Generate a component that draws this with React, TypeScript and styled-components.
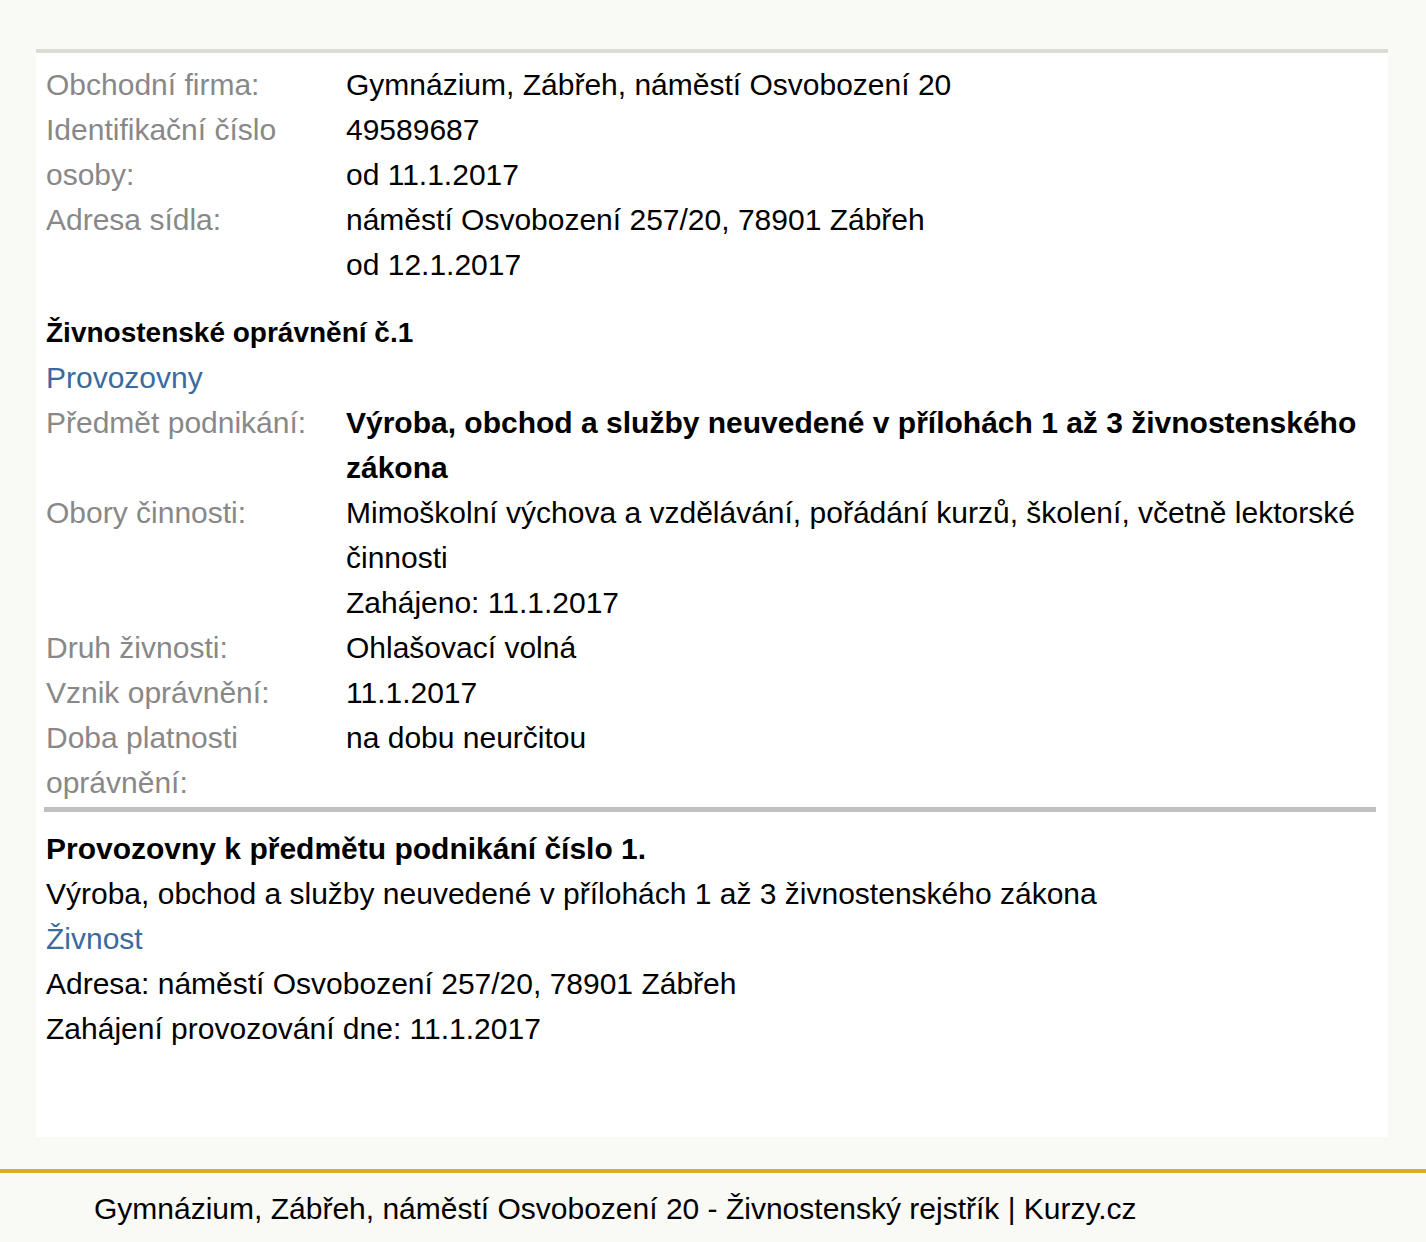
import React from "react";
import styled, { createGlobalStyle } from "styled-components";

const Global = createGlobalStyle`
  html, body { margin: 0; padding: 0; background: #f9f9f5; }
  body { font-family: "Liberation Sans", Arial, sans-serif; font-size: 30px; line-height: 45px; color: #000; }
`;

const Page = styled.div`
  display: flex;
  flex-direction: column;
  padding-top: 49px;
`;

const Panel = styled.main`
  margin: 0 38px 0 36px;
  background: #fff;
  border-top: 4px solid #dcddd2;
  padding: 9px 10px 86px 10px;
  display: flex;
  flex-direction: column;
`;

const InfoTable = styled.div`
  display: grid;
  grid-template-columns: 300px 1fr;
`;

const Label = styled.div`
  color: #888888;
  padding-right: 20px;
`;

const Value = styled.div<{ $bold?: boolean }>`
  font-weight: ${(p) => (p.$bold ? 700 : 400)};
`;

const SectionTitle = styled.h3`
  margin: 23px 0 0 0;
  font-size: 28px;
  font-weight: 700;
  line-height: 45px;
`;

const Link = styled.a`
  color: #3a6a9e;
  text-decoration: none;
  display: block;
`;

const Divider = styled.hr`
  border: none;
  height: 5px;
  background: #c0c0c0;
  margin: 2px 2px 14px -2px;
`;

const BlockTitle = styled.h3`
  margin: 0;
  font-size: 30px;
  font-weight: 700;
  line-height: 45px;
`;

const Line = styled.div``;

const Footer = styled.footer`
  margin-top: 32px;
  border-top: 4px solid #dfa82a;
  padding: 13px 0 11px 94px;
`;

const rows1: { label: string; values: string[] }[] = [
  { label: "Obchodní firma:", values: ["Gymnázium, Zábřeh, náměstí Osvobození 20"] },
  { label: "Identifikační číslo osoby:", values: ["49589687", "od 11.1.2017"] },
  { label: "Adresa sídla:", values: ["náměstí Osvobození 257/20, 78901 Zábřeh", "od 12.1.2017"] },
];

const rows2: { label: string; values: string[]; bold?: boolean }[] = [
  {
    label: "Předmět podnikání:",
    values: ["Výroba, obchod a služby neuvedené v přílohách 1 až 3 živnostenského zákona"],
    bold: true,
  },
  {
    label: "Obory činnosti:",
    values: [
      "Mimoškolní výchova a vzdělávání, pořádání kurzů, školení, včetně lektorské činnosti",
      "Zahájeno: 11.1.2017",
    ],
  },
  { label: "Druh živnosti:", values: ["Ohlašovací volná"] },
  { label: "Vznik oprávnění:", values: ["11.1.2017"] },
  { label: "Doba platnosti oprávnění:", values: ["na dobu neurčitou"] },
];

export default function App() {
  return (
    <>
      <Global />
      <Page>
        <Panel>
          <InfoTable>
            {rows1.map((r) => (
              <React.Fragment key={r.label}>
                <Label>{r.label}</Label>
                <Value>
                  {r.values.map((v) => (
                    <Line key={v}>{v}</Line>
                  ))}
                </Value>
              </React.Fragment>
            ))}
          </InfoTable>
          <SectionTitle>Živnostenské oprávnění č.1</SectionTitle>
          <Link href="#">Provozovny</Link>
          <InfoTable>
            {rows2.map((r) => (
              <React.Fragment key={r.label}>
                <Label>{r.label}</Label>
                <Value $bold={r.bold}>
                  {r.values.map((v) => (
                    <Line key={v}>{v}</Line>
                  ))}
                </Value>
              </React.Fragment>
            ))}
          </InfoTable>
          <Divider />
          <BlockTitle>Provozovny k předmětu podnikání číslo 1.</BlockTitle>
          <Line>Výroba, obchod a služby neuvedené v přílohách 1 až 3 živnostenského zákona</Line>
          <Link href="#">Živnost</Link>
          <Line>Adresa: náměstí Osvobození 257/20, 78901 Zábřeh</Line>
          <Line>Zahájení provozování dne: 11.1.2017</Line>
        </Panel>
        <Footer>Gymnázium, Zábřeh, náměstí Osvobození 20 - Živnostenský rejstřík | Kurzy.cz</Footer>
      </Page>
    </>
  );
}
